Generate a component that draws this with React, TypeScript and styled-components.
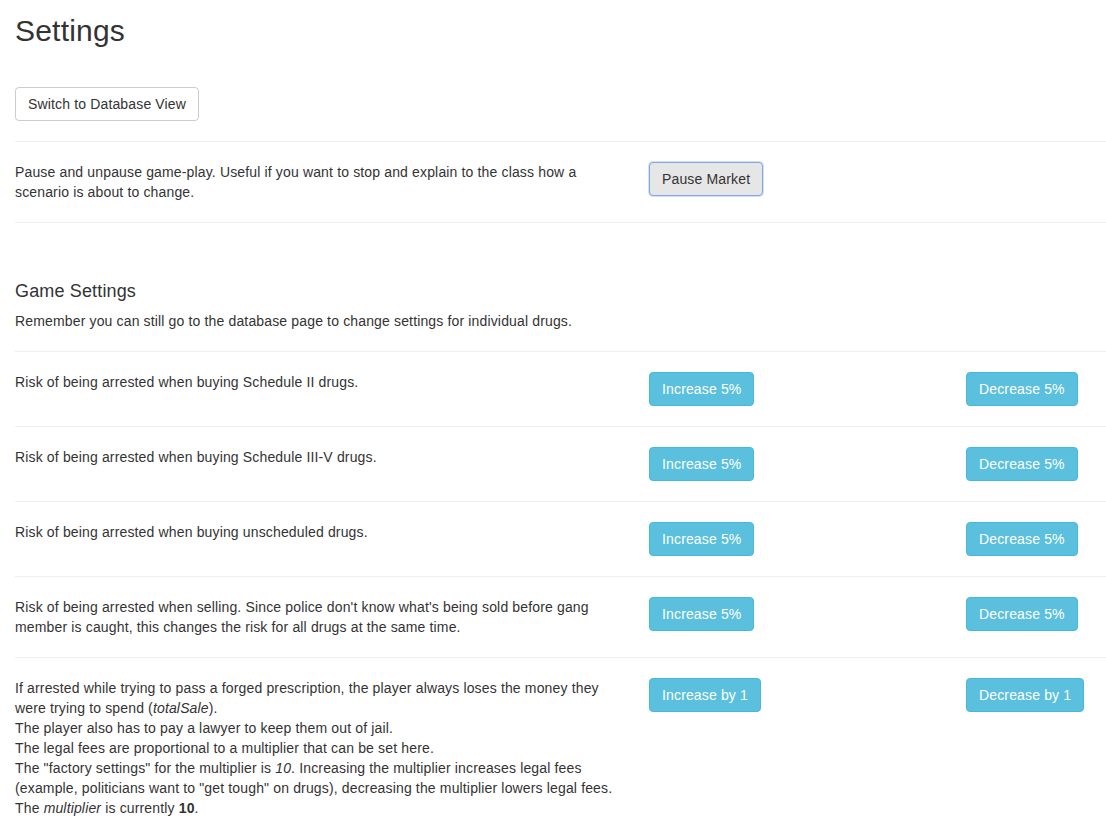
import React from "react";
import styled, { createGlobalStyle } from "styled-components";

const GlobalStyle = createGlobalStyle`
  html, body { margin: 0; padding: 0; background: #fff; overflow: hidden; }
  body {
    font-family: "Liberation Sans", Arial, Helvetica, sans-serif;
    font-size: 14px;
    line-height: 20px;
    letter-spacing: 0.15px;
    color: #333;
  }
  * { box-sizing: border-box; }
`;

const Page = styled.div`
  width: 1106px;
  overflow: hidden;
  padding-left: 15px;
`;

const Title = styled.h2`
  font-size: 30px;
  font-weight: 500;
  line-height: 33px;
  letter-spacing: 0.2px;
  margin: 14px 0 40px;
`;

const Button = styled.button<{ $variant?: "default" | "info" | "active" }>`
  display: inline-block;
  font-family: inherit;
  font-size: 14px;
  line-height: 20px;
  letter-spacing: 0.15px;
  padding: 6px 12px;
  border-radius: 4px;
  cursor: pointer;
  white-space: nowrap;
  border: 1px solid
    ${(p) => (p.$variant === "info" ? "#46b8da" : p.$variant === "active" ? "#82a7e2" : "#ccc")};
  background: ${(p) => (p.$variant === "info" ? "#5bc0de" : p.$variant === "active" ? "#e6e6e6" : "#fff")};
  color: ${(p) => (p.$variant === "info" ? "#fff" : "#333")};
  box-shadow: ${(p) => (p.$variant === "active" ? "0 0 0 1px rgba(130,167,226,0.35)" : "none")};
`;

const Rule = styled.hr`
  border: 0;
  border-top: 1px solid #eee;
  margin: 20px 0;
  height: 0;
`;

const Row = styled.div`
  display: grid;
  grid-template-columns: 619px 317px 1fr;
  align-items: start;
  margin-left: -15px;
  padding-left: 15px;
`;

const Cell = styled.div`
  padding-left: 15px;
`;

const Desc = styled.div`
  padding-right: 15px;
  margin-left: -15px;
  padding-left: 15px;
`;

const SectionTitle = styled.h4`
  font-size: 18px;
  font-weight: 500;
  line-height: 20px;
  margin: 58px 0 10px;
`;

const Note = styled.p`
  margin: 0;
`;

const settings = [
  "Risk of being arrested when buying Schedule II drugs.",
  "Risk of being arrested when buying Schedule III-V drugs.",
  "Risk of being arrested when buying unscheduled drugs.",
  "Risk of being arrested when selling. Since police don't know what's being sold before gang member is caught, this changes the risk for all drugs at the same time.",
];

export default function App() {
  return (
    <>
      <GlobalStyle />
      <Page>
        <Title>Settings</Title>
        <Button>Switch to Database View</Button>
        <Rule />
        <Row>
          <Desc>
            Pause and unpause game-play. Useful if you want to stop and explain to the class how a scenario is
            about to change.
          </Desc>
          <Cell>
            <Button $variant="active">Pause Market</Button>
          </Cell>
          <div />
        </Row>
        <Rule />
        <SectionTitle>Game Settings</SectionTitle>
        <Note>Remember you can still go to the database page to change settings for individual drugs.</Note>
        {settings.map((s) => (
          <React.Fragment key={s}>
            <Rule />
            <Row>
              <Desc>{s}</Desc>
              <Cell>
                <Button $variant="info">Increase 5%</Button>
              </Cell>
              <Cell>
                <Button $variant="info">Decrease 5%</Button>
              </Cell>
            </Row>
          </React.Fragment>
        ))}
        <Rule />
        <Row>
          <Desc>
            If arrested while trying to pass a forged prescription, the player always loses the money they were
            trying to spend (<em>totalSale</em>).
            <br />
            The player also has to pay a lawyer to keep them out of jail.
            <br />
            The legal fees are proportional to a multiplier that can be set here.
            <br />
            The "factory settings" for the multiplier is <em>10</em>. Increasing the multiplier increases legal
            fees (example, politicians want to "get tough" on drugs), decreasing the multiplier lowers legal fees.
            <br />
            The <em>multiplier</em> is currently <strong>10</strong>.
          </Desc>
          <Cell>
            <Button $variant="info">Increase by 1</Button>
          </Cell>
          <Cell>
            <Button $variant="info">Decrease by 1</Button>
          </Cell>
        </Row>
      </Page>
    </>
  );
}
